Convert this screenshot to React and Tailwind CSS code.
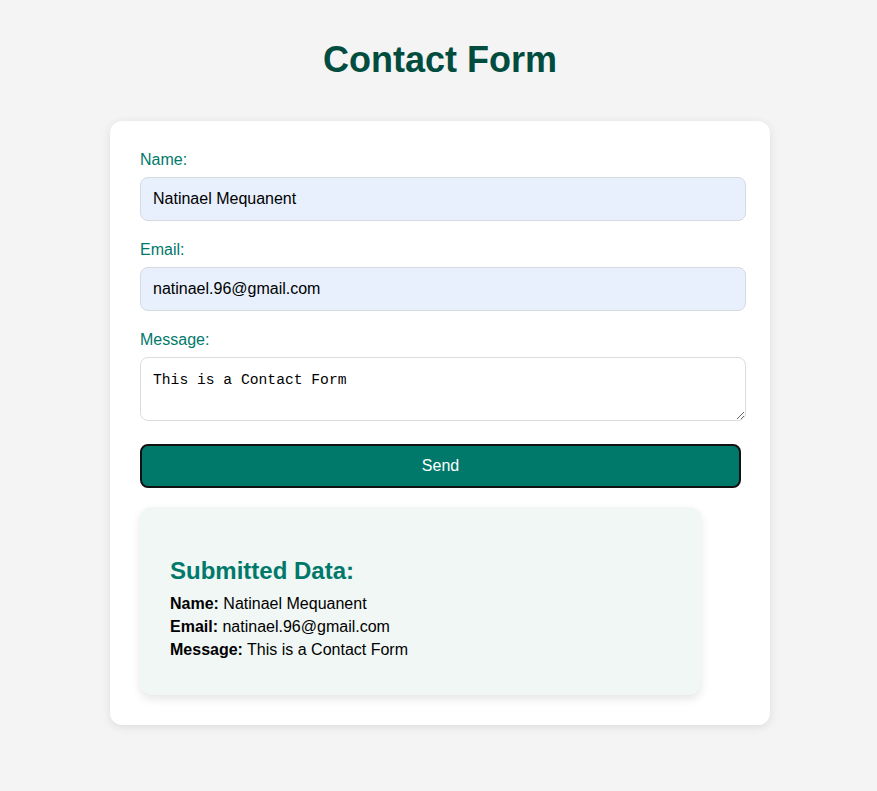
import React from 'react'

const data = {
  name: 'Natinael Mequanent',
  email: 'natinael.96@gmail.com',
  message: 'This is a Contact Form',
}

export default function App() {
  return (
    <div className="min-h-[791px] bg-[#f4f4f4] pl-[3px] pt-[40px] font-['Liberation_Sans',Arial,sans-serif]">
      <h1 className="text-center text-[36px] leading-[40px] font-bold text-[#004d40]">Contact Form</h1>

      <div className="mx-auto mt-[41px] w-[660px] rounded-[12px] bg-white pl-[30px] pt-[30px] pb-[30px] shadow-[0_2px_10px_rgba(0,0,0,0.1)]">
        <label className="block text-[16px] leading-[18px] text-[#00796b]">Name:</label>
        <input
          readOnly
          value={data.name}
          className="mt-2 block h-[44px] w-[606px] rounded-[8px] border border-[#d5d9e0] bg-[#e8f0fe] px-[12px] text-[16px] text-black outline-none"
        />

        <label className="mt-5 block text-[16px] leading-[18px] text-[#00796b]">Email:</label>
        <input
          readOnly
          value={data.email}
          className="mt-2 block h-[44px] w-[606px] rounded-[8px] border border-[#d5d9e0] bg-[#e8f0fe] px-[12px] text-[16px] text-black outline-none"
        />

        <label className="mt-5 block text-[16px] leading-[18px] text-[#00796b]">Message:</label>
        <textarea
          readOnly
          value={data.message}
          className="mt-2 block h-[64px] w-[606px] rounded-[8px] border border-[#dcdcdc] bg-white px-[12px] pt-[14px] font-['Liberation_Mono',monospace] text-[14.67px] leading-[17px] text-black outline-none"
        />

        <button className="mt-[23px] block h-[44px] w-[601px] rounded-[8px] border-2 border-[#111] bg-[#00796b] text-[16px] text-white">
          Send
        </button>

        <div className="mt-[19px] w-[561px] rounded-[12px] bg-[#f0f7f5] px-[30px] pt-[50px] pb-[36px] shadow-[0_4px_10px_rgba(0,0,0,0.1)]">
          <h3 className="text-[24px] leading-[28px] font-bold text-[#00796b]">Submitted Data:</h3>
          <div className="mt-[10px] flex flex-col gap-[5px] text-[16px] leading-[18px] text-black">
            <p><strong>Name:</strong> {data.name}</p>
            <p><strong>Email:</strong> {data.email}</p>
            <p><strong>Message:</strong> {data.message}</p>
          </div>
        </div>
      </div>
    </div>
  )
}
